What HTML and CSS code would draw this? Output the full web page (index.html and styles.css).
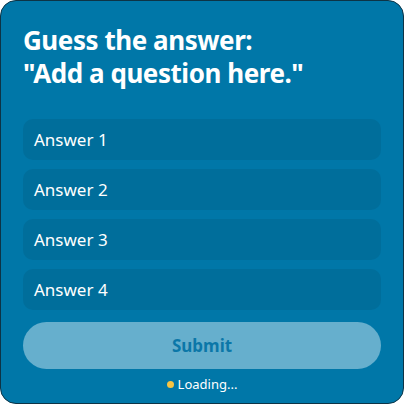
FILE: index.html
```html
<!DOCTYPE html>
<html>
<head>
<meta charset="utf-8">
<link rel="stylesheet" href="styles.css">
</head>
<body>
<div class="card">
  <h1 class="title">Guess the answer:<br>"Add a question here."</h1>
  <div class="answers">
    <div class="answer">Answer 1</div>
    <div class="answer">Answer 2</div>
    <div class="answer">Answer 3</div>
    <div class="answer">Answer 4</div>
  </div>
  <button class="submit">Submit</button>
  <div class="status"><span class="dot"></span>Loading...</div>
</div>
</body>
</html>
```
FILE: styles.css
```css
html, body {
  margin: 0;
  padding: 0;
  background: #ffffff;
}
body {
  width: 404px;
  height: 404px;
  font-family: "Noto Sans", "Open Sans", sans-serif;
}
.card {
  box-sizing: border-box;
  width: 404px;
  height: 404px;
  background: #0077a8;
  border: 1px solid #0d3446;
  border-radius: 16px;
  padding: 23px 22px 0;
  display: flex;
  flex-direction: column;
}
.title {
  margin: 0;
  color: #ffffff;
  font-size: 26px;
  font-weight: 700;
  line-height: 33px;
  letter-spacing: -0.45px;
}
.answers {
  margin-top: 29px;
  display: flex;
  flex-direction: column;
  gap: 9px;
}
.answer {
  height: 41px;
  background: #006e9b;
  border-radius: 10px;
  color: #ffffff;
  font-size: 17px;
  line-height: 41px;
  padding-left: 11px;
}
.submit {
  margin-top: 12px;
  height: 47px;
  border: none;
  border-radius: 24px;
  background: #66afcd;
  color: #0b77a8;
  font-family: inherit;
  font-size: 17px;
  font-weight: 700;
  padding: 0;
}
.status {
  margin-top: 7px;
  display: flex;
  align-items: center;
  justify-content: center;
  gap: 4px;
  color: #ffffff;
  font-size: 13px;
  line-height: 16px;
}
.dot {
  width: 7px;
  height: 7px;
  border-radius: 50%;
  background: #f5c443;
}
```
